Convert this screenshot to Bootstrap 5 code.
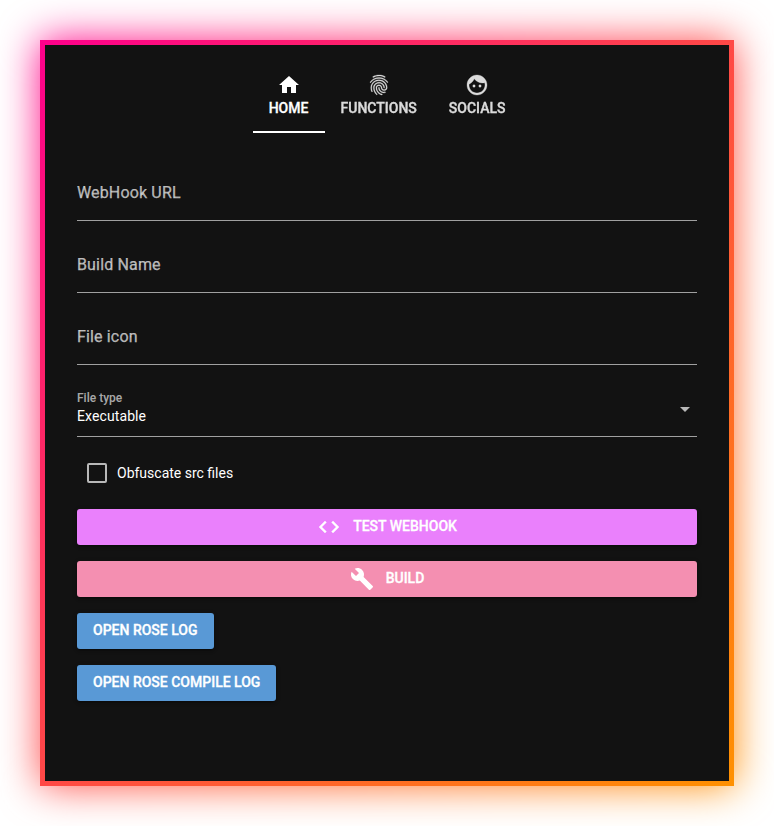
<!DOCTYPE html>
<html lang="en">
<head>
<meta charset="utf-8">
<meta name="viewport" content="width=device-width, initial-scale=1">
<title>Rose Builder</title>
<link href="https://cdn.jsdelivr.net/npm/bootstrap@5.3.0/dist/css/bootstrap.min.css" rel="stylesheet">
<style>
  body { font-family: Roboto, sans-serif; font-size: 14px; line-height: 1.5; color: #fff; background: #fff; height: 826px; overflow: hidden; }
  .glow-frame { width: 694px; height: 746px; margin: 40px; padding: 5px; isolation: isolate; background: linear-gradient(to bottom right, #ff008c, #ff9100); }
  /* soft halo behind the frame */
  .glow-frame::before { content: ""; position: absolute; inset: 0; z-index: -1; background: inherit; filter: blur(20px); }
  .glow-frame::after { content: ""; position: absolute; inset: 0; z-index: -1; background: inherit; }
  .panel { background: #121212; padding: 16px 32px; }
  .svg-icon { width: 24px; height: 24px; fill: currentColor; flex: none; }
  .tab-link { height: 72px; padding: 0 16px 1px; opacity: .85; color: #fff; font-weight: 500; line-height: 22px; border: 0; background: none; border-bottom: 2px solid transparent; }
  .tab-link.active { opacity: 1; border-bottom-color: #fff; min-width: 72px; }
  .tab-link span, .action span { -webkit-text-stroke: .3px currentColor; }
  .fields { margin-top: 32px; gap: 16px; }
  .field { height: 56px; border-bottom: 1px solid rgba(255,255,255,.6); }
  .field-label { padding-top: 18px; font-size: 16px; line-height: 20px; letter-spacing: .15px; color: rgba(255,255,255,.67); -webkit-text-stroke: .25px currentColor; }
  .float-label { padding-top: 10px; font-size: 12px; font-weight: 500; line-height: 15px; letter-spacing: 0; color: rgba(255,255,255,.65); }
  .float-value { line-height: 21px; letter-spacing: .1px; }
  .caret { color: rgba(255,255,255,.7); }
  .check-row { height: 40px; margin-top: 16px; padding-left: 10px; gap: 10px; }
  .check-row .form-check-input { width: 20px; height: 20px; margin: 0; border: 2px solid rgba(255,255,255,.7); border-radius: 2px; background-color: transparent; }
  .actions { margin-top: 16px; gap: 16px; }
  .action { --bs-btn-color: #fff; --bs-btn-hover-color: #fff; --bs-btn-border-width: 0; --bs-btn-border-radius: 3px; --bs-btn-padding-x: 16px; --bs-btn-padding-y: 0; --bs-btn-font-size: 14px; --bs-btn-font-weight: 500; height: 36px; line-height: 24px; gap: 12px; box-shadow: 0 1px 5px rgba(0,0,0,.2), 0 2px 2px rgba(0,0,0,.14), 0 3px 1px -2px rgba(0,0,0,.12); }
  .action span { margin-top: -3px; }
  .action-violet { --bs-btn-bg: #ea80fc; --bs-btn-hover-bg: #e46df8; }
  .action-pink { --bs-btn-bg: #f48fb1; --bs-btn-hover-bg: #ef7da4; }
  .action-blue { --bs-btn-bg: #5999d6; --bs-btn-hover-bg: #4a8bca; }
</style>
</head>
<body>
<main class="glow-frame position-relative">
  <div class="panel h-100">
    <nav class="d-flex justify-content-center" aria-label="Sections">
      <button class="tab-link active d-flex flex-column align-items-center justify-content-center" type="button">
        <svg class="svg-icon" viewBox="0 0 24 24"><path d="M10 20v-6h4v6h5v-8h3L12 3 2 12h3v8z"/></svg>
        <span>HOME</span>
      </button>
      <button class="tab-link d-flex flex-column align-items-center justify-content-center" type="button">
        <svg class="svg-icon" viewBox="0 0 24 24" stroke="currentColor" stroke-width=".3"><path d="M17.81 4.47c-.08 0-.16-.02-.23-.06C15.66 3.42 14 3 12.01 3c-1.98 0-3.86.47-5.57 1.41-.24.13-.54.04-.68-.2-.13-.24-.04-.55.2-.68C7.82 2.52 9.86 2 12.01 2c2.13 0 3.99.47 6.03 1.52.25.13.34.43.21.67-.09.18-.26.28-.44.28zM3.5 9.72c-.1 0-.2-.03-.29-.09-.23-.16-.28-.47-.12-.7.99-1.4 2.25-2.5 3.75-3.27C9.98 4.04 14 4.03 17.15 5.65c1.5.77 2.76 1.86 3.75 3.25.16.22.11.54-.12.7-.23.16-.54.11-.7-.12-.9-1.26-2.04-2.25-3.39-2.94-2.87-1.47-6.54-1.47-9.4.01-1.36.7-2.5 1.7-3.4 2.96-.08.14-.23.21-.39.21zm6.25 12.07c-.13 0-.26-.05-.35-.15-.87-.87-1.34-1.43-2.01-2.64-.69-1.23-1.05-2.73-1.05-4.34 0-2.97 2.54-5.39 5.66-5.39s5.66 2.42 5.66 5.39c0 .28-.22.5-.5.5s-.5-.22-.5-.5c0-2.42-2.09-4.39-4.66-4.39-2.57 0-4.66 1.97-4.66 4.39 0 1.44.32 2.77.93 3.85.64 1.15 1.08 1.64 1.85 2.42.19.2.19.51 0 .71-.11.1-.24.15-.37.15zm7.17-1.85c-1.19 0-2.24-.3-3.1-.89-1.49-1.01-2.38-2.65-2.38-4.39 0-.28.22-.5.5-.5s.5.22.5.5c0 1.41.72 2.74 1.94 3.56.71.48 1.54.71 2.54.71.24 0 .64-.03 1.04-.1.27-.05.53.13.58.41.05.27-.13.53-.41.58-.57.11-1.07.12-1.21.12zM14.91 22c-.04 0-.09-.01-.13-.02-1.59-.44-2.63-1.03-3.72-2.1-1.4-1.39-2.17-3.24-2.17-5.22 0-1.62 1.38-2.94 3.08-2.94 1.7 0 3.08 1.32 3.08 2.94 0 1.07.93 1.94 2.08 1.94s2.08-.87 2.08-1.94c0-3.77-3.25-6.83-7.25-6.83-2.84 0-5.44 1.58-6.61 4.03-.39.81-.59 1.76-.59 2.8 0 .78.07 2.01.67 3.61.1.26-.03.55-.29.64-.26.1-.55-.04-.64-.29-.49-1.31-.73-2.61-.73-3.96 0-1.2.23-2.29.68-3.24 1.33-2.79 4.28-4.6 7.51-4.6 4.55 0 8.25 3.51 8.25 7.83 0 1.62-1.38 2.94-3.08 2.94s-3.08-1.32-3.08-2.94c0-1.07-.93-1.94-2.08-1.94s-2.08.87-2.08 1.94c0 1.71.66 3.31 1.87 4.51.95.94 1.86 1.46 3.27 1.85.27.07.42.35.35.61-.05.23-.26.38-.47.38z"/></svg>
        <span>FUNCTIONS</span>
      </button>
      <button class="tab-link d-flex flex-column align-items-center justify-content-center" type="button">
        <svg class="svg-icon" viewBox="0 0 24 24" stroke="currentColor" stroke-width=".3"><path d="M9 11.75c-.69 0-1.25.56-1.25 1.25s.56 1.25 1.25 1.25 1.25-.56 1.25-1.25-.56-1.25-1.25-1.25zm6 0c-.69 0-1.25.56-1.25 1.25s.56 1.25 1.25 1.25 1.25-.56 1.25-1.25-.56-1.25-1.25-1.25zM12 2C6.48 2 2 6.48 2 12s4.48 10 10 10 10-4.48 10-10S17.52 2 12 2zm0 18c-4.41 0-8-3.59-8-8 0-.29.02-.58.05-.86 2.36-1.05 4.23-2.98 5.21-5.37C11.07 8.33 14.05 10 17.42 10c.78 0 1.53-.09 2.25-.26.21.71.33 1.47.33 2.26 0 4.41-3.59 8-8 8z"/></svg>
        <span>SOCIALS</span>
      </button>
    </nav>

    <div class="fields d-flex flex-column">
      <div class="field"><div class="field-label">WebHook URL</div></div>
      <div class="field"><div class="field-label">Build Name</div></div>
      <div class="field"><div class="field-label">File icon</div></div>
      <div class="field d-flex justify-content-between align-items-center">
        <div class="align-self-start">
          <div class="float-label">File type</div>
          <div class="float-value">Executable</div>
        </div>
        <svg class="svg-icon caret" viewBox="0 0 24 24"><path d="M7 10l5 5 5-5z"/></svg>
      </div>
    </div>

    <label class="check-row d-flex align-items-center">
      <input class="form-check-input" type="checkbox">
      <span>Obfuscate src files</span>
    </label>

    <div class="actions d-flex flex-column align-items-start">
      <button class="btn action action-violet w-100 d-flex align-items-center justify-content-center" type="button">
        <svg class="svg-icon" viewBox="0 0 24 24" stroke="currentColor" stroke-width=".4"><path d="M9.4 16.6L4.8 12l4.6-4.6L8 6l-6 6 6 6 1.4-1.4zm5.2 0l4.6-4.6-4.6-4.6L16 6l6 6-6 6-1.4-1.4z"/></svg>
        <span>TEST WEBHOOK</span>
      </button>
      <button class="btn action action-pink w-100 d-flex align-items-center justify-content-center" type="button">
        <svg class="svg-icon" viewBox="0 0 24 24"><path d="M22.7 19l-9.1-9.1c.9-2.3.4-5-1.5-6.9-2-2-5-2.4-7.4-1.3L9 6 6 9 1.6 4.7C.4 7.1.9 10.1 2.9 12.1c1.9 1.9 4.6 2.4 6.9 1.5l9.1 9.1c.4.4 1 .4 1.4 0l2.3-2.3c.5-.4.5-1.1.1-1.4z"/></svg>
        <span>BUILD</span>
      </button>
      <button class="btn action action-blue d-flex align-items-center" type="button"><span>OPEN ROSE LOG</span></button>
      <button class="btn action action-blue d-flex align-items-center" type="button"><span>OPEN ROSE COMPILE LOG</span></button>
    </div>
  </div>
</main>
<script src="https://cdn.jsdelivr.net/npm/bootstrap@5.3.0/dist/js/bootstrap.bundle.min.js"></script>
</body>
</html>
